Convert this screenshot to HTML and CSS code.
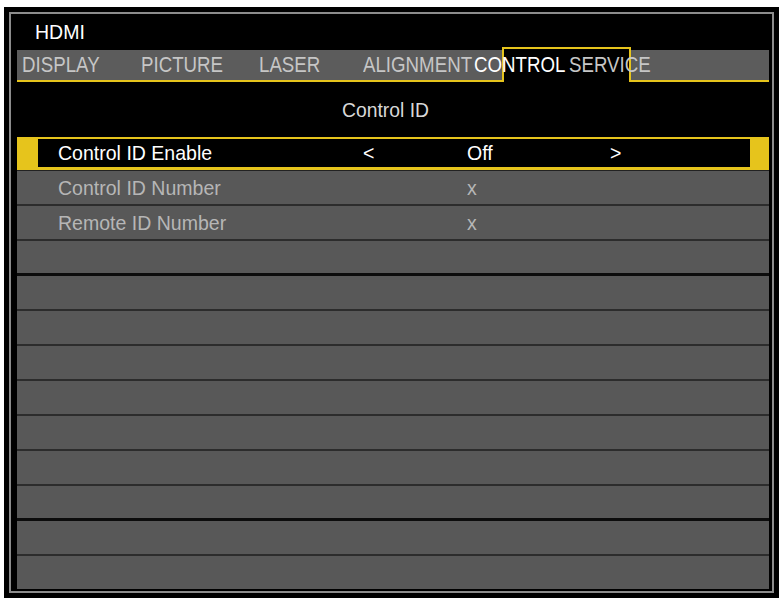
FILE: index.html
```html
<!DOCTYPE html>
<html lang="en">
<head>
    <meta charset="UTF-8">
    <meta name="viewport" content="width=device-width, initial-scale=1.0">
    <title>Control ID</title>
    <link rel="stylesheet" href="styles.css">
</head>
<body>
    <div class="frame">
        <div class="screen">
            <div class="source"><span class="txt">HDMI</span></div>
            <div class="tabs">
                <span class="tab"><span class="txt">DISPLAY</span></span>
                <span class="tab"><span class="txt">PICTURE</span></span>
                <span class="tab"><span class="txt">LASER</span></span>
                <span class="tab"><span class="txt">ALIGNMENT</span></span>
                <span class="tab active"><span class="txt">CONTROL</span></span>
                <span class="tab"><span class="txt">SERVICE</span></span>
            </div>
            <div class="page-title"><span class="txt">Control ID</span></div>
            <div class="menu">
                <div class="row selected">
                    <span class="txt">Control ID Enable</span>
                    <span class="txt">&lt;</span>
                    <span class="txt">Off</span>
                    <span class="txt">&gt;</span>
                </div>
                <div class="row">
                    <span class="txt">Control ID Number</span>
                    <span></span>
                    <span class="txt">x</span>
                </div>
                <div class="row">
                    <span class="txt">Remote ID Number</span>
                    <span></span>
                    <span class="txt">x</span>
                </div>
                <div class="row divider"></div>
                <div class="row"></div>
                <div class="row"></div>
                <div class="row"></div>
                <div class="row"></div>
                <div class="row"></div>
                <div class="row"></div>
                <div class="row divider"></div>
                <div class="row"></div>
                <div class="row last"></div>
            </div>
        </div>
    </div>
</body>
</html>
```

FILE: styles.css
```css
body {
    margin: 0;
    background: #fff;
    font-family: "Liberation Sans", Arial, sans-serif;
}
.txt {
    display: inline-block;
    white-space: nowrap;
    transform-origin: left center;
}
.frame {
    width: 775px;
    height: 591px;
    box-sizing: border-box;
    margin: 7px 0 0 4px;
    padding: 5px;
    background: #000;
}
.screen {
    height: 100%;
    box-sizing: border-box;
    border: 2px solid #8c8c8c;
    padding: 0 3px 0 6px;
    background: #000;
    display: flex;
    flex-direction: column;
}
.source {
    height: 36px;
    line-height: 36px;
    padding-left: 18px;
    font-size: 21px;
    color: #fff;
}
.source .txt {
    transform: scaleX(0.93);
}
.tabs {
    position: relative;
    z-index: 0;
    height: 30px;
    line-height: 30px;
    background: #5c5c5c;
    border-bottom: 2px solid #e6c41c;
    padding-left: 5px;
    display: grid;
    grid-template-columns: 119px 118px 104px 111px 95px auto;
    font-size: 22px;
    color: #c6c6c6;
}
.tabs .txt {
    transform: scaleX(0.85);
}
.tab {
    position: relative;
    white-space: nowrap;
}
.tab.active {
    color: #fff;
}
.tab.active::before {
    content: "";
    position: absolute;
    z-index: -1;
    left: 28px;
    top: -3px;
    bottom: -2px;
    width: 125px;
    border: 2px solid #e6c41c;
    border-bottom: none;
    background: #000;
}
.page-title {
    height: 55px;
    line-height: 55px;
    padding-left: 325px;
    font-size: 21px;
    color: #d8d8d8;
}
.page-title .txt {
    transform: scaleX(0.92);
}
.menu {
    display: flex;
    flex-direction: column;
}
.row {
    height: 33px;
    box-sizing: content-box;
    background: #585858;
    border-bottom: 2px solid #2c2c2c;
    padding-left: 41px;
    display: grid;
    grid-template-columns: 305px 104px 143px 1fr;
    align-items: center;
    font-size: 21px;
    color: #b6b6b6;
}
.row .txt {
    transform: scaleX(0.93);
}
.row.divider {
    height: 32px;
    border-bottom: 3px solid #0c0c0c;
}
.row.last {
    border-bottom: none;
}
.row.selected {
    height: 28px;
    background: #000;
    color: #fff;
    border-style: solid;
    border-color: #e6c41c;
    border-width: 2px 19px 3px 21px;
    padding-left: 20px;
    box-shadow: 0 1px 0 #222;
    margin-bottom: 1px;
}
```
